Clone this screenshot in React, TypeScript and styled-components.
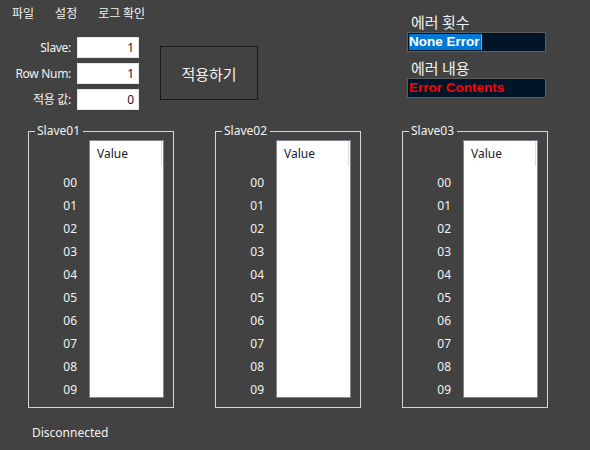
import React from "react";
import styled, { createGlobalStyle } from "styled-components";

const Global = createGlobalStyle`
  html, body { margin: 0; padding: 0; background: #424242; }
  * { box-sizing: border-box; }
`;

const FONT = `"Noto Sans", "Noto Sans CJK KR", sans-serif`;

const Page = styled.div`
  width: 590px;
  height: 450px;
  background: #424242;
  color: #f2f2f2;
  font-family: ${FONT};
  font-size: 12px;
  display: flex;
  flex-direction: column;
  overflow: hidden;
`;

const TopRow = styled.div`
  display: flex;
  height: 123px;
`;

const LeftCol = styled.div`
  display: flex;
  flex-direction: column;
`;

const MenuBar = styled.div`
  display: flex;
  height: 26px;
  padding-left: 5px;
  align-items: center;
`;

const MenuItem = styled.span`
  padding: 0 7px;
  margin-right: 7px;
  line-height: 16px;
  font-family: "Noto Sans CJK KR", sans-serif;
`;

const FormArea = styled.div`
  display: flex;
  align-items: flex-start;
  padding-top: 11px;
`;

const FieldGrid = styled.div`
  display: grid;
  grid-template-columns: 71px 62px;
  column-gap: 6px;
  row-gap: 5px;
  align-items: center;
`;

const FieldLabel = styled.label`
  text-align: right;
  line-height: 21px;
  font-family: "Noto Sans", "Noto Sans CJK KR", sans-serif;
  letter-spacing: -0.3px;
`;

const FieldInput = styled.div`
  height: 21px;
  background: #ffffff;
  border: 1px solid #e6e6e6;
  color: #1c0f2a;
  text-align: right;
  padding-right: 4px;
  line-height: 19px;
  font-size: 12px;
`;

const ApplyButton = styled.button`
  margin-left: 21px;
  margin-top: 9px;
  width: 98px;
  height: 54px;
  background: #424242;
  border: 1px solid #1a1a1a;
  color: #f2f2f2;
  font-family: "Noto Sans CJK KR", sans-serif;
  font-size: 15px;
  padding: 0;
`;

const ErrorPanel = styled.div`
  margin-left: auto;
  margin-right: 44px;
  width: 139px;
  display: flex;
  flex-direction: column;
  padding-top: 12px;
`;

const ErrorLabel = styled.div`
  font-family: "Noto Sans CJK KR", sans-serif;
  font-size: 15px;
  line-height: 20px;
  padding-left: 4px;
  margin-top: ${(p: { $gap?: number }) => p.$gap ?? 0}px;
`;

const ErrorBox = styled.div`
  height: 20px;
  background: #001628;
  border: 1px solid #5e5e5e;
  padding-left: 1px;
  display: flex;
  align-items: center;
  font-family: "Liberation Sans", Arial, sans-serif;
  font-weight: bold;
  font-size: 13.5px;
`;

const Selected = styled.span`
  background: #0078d7;
  color: #ffffff;
  line-height: 16px;
  padding-right: 1px;
  border-right: 1px solid #ff8c00;
`;

const ErrorText = styled.span`
  color: #ff0000;
  line-height: 16px;
`;

const GroupRow = styled.div`
  display: flex;
  gap: 41px;
  padding-left: 28px;
  margin-top: 8px;
`;

const GroupBox = styled.div`
  position: relative;
  width: 146px;
  height: 277px;
  border: 1px solid #d6d6d6;
  display: flex;
  padding: 8px 9px 0 0;
`;

const Legend = styled.span`
  position: absolute;
  top: -9px;
  left: 6px;
  padding: 0 3px 0 2px;
  background: #424242;
  line-height: 16px;
  font-size: 12px;
`;

const IndexCol = styled.div`
  width: 48px;
  padding-top: 31px;
  display: flex;
  flex-direction: column;
  align-items: flex-end;
`;

const IndexLabel = styled.div`
  height: 23px;
  line-height: 23px;
  font-size: 12px;
`;

const ListBox = styled.div`
  margin-left: 12px;
  width: 75px;
  height: 258px;
  background: #ffffff;
  border: 1px solid #82858f;
`;

const ListHeader = styled.div`
  height: 25px;
  width: 72px;
  border-right: 1px solid #dcdcdc;
  color: #1a1a2a;
  padding-left: 7px;
  line-height: 26px;
  font-size: 12px;
`;

const Status = styled.div`
  padding-left: 32px;
  margin-top: 17px;
  line-height: 16px;
`;

const slaves = ["Slave01", "Slave02", "Slave03"];
const rows = ["00", "01", "02", "03", "04", "05", "06", "07", "08", "09"];

export default function App() {
  return (
    <Page>
      <Global />
      <TopRow>
        <LeftCol>
          <MenuBar>
            <MenuItem>파일</MenuItem>
            <MenuItem>설정</MenuItem>
            <MenuItem>로그 확인</MenuItem>
          </MenuBar>
          <FormArea>
            <FieldGrid>
              <FieldLabel>Slave:</FieldLabel>
              <FieldInput>1</FieldInput>
              <FieldLabel>Row Num:</FieldLabel>
              <FieldInput>1</FieldInput>
              <FieldLabel>적용 값:</FieldLabel>
              <FieldInput>0</FieldInput>
            </FieldGrid>
            <ApplyButton>적용하기</ApplyButton>
          </FormArea>
        </LeftCol>
        <ErrorPanel>
          <ErrorLabel>에러 횟수</ErrorLabel>
          <ErrorBox>
            <Selected>None Error</Selected>
          </ErrorBox>
          <ErrorLabel $gap={6}>에러 내용</ErrorLabel>
          <ErrorBox>
            <ErrorText>Error Contents</ErrorText>
          </ErrorBox>
        </ErrorPanel>
      </TopRow>
      <GroupRow>
        {slaves.map((s) => (
          <GroupBox key={s}>
            <Legend>{s}</Legend>
            <IndexCol>
              {rows.map((r) => (
                <IndexLabel key={r}>{r}</IndexLabel>
              ))}
            </IndexCol>
            <ListBox>
              <ListHeader>Value</ListHeader>
            </ListBox>
          </GroupBox>
        ))}
      </GroupRow>
      <Status>Disconnected</Status>
    </Page>
  );
}
